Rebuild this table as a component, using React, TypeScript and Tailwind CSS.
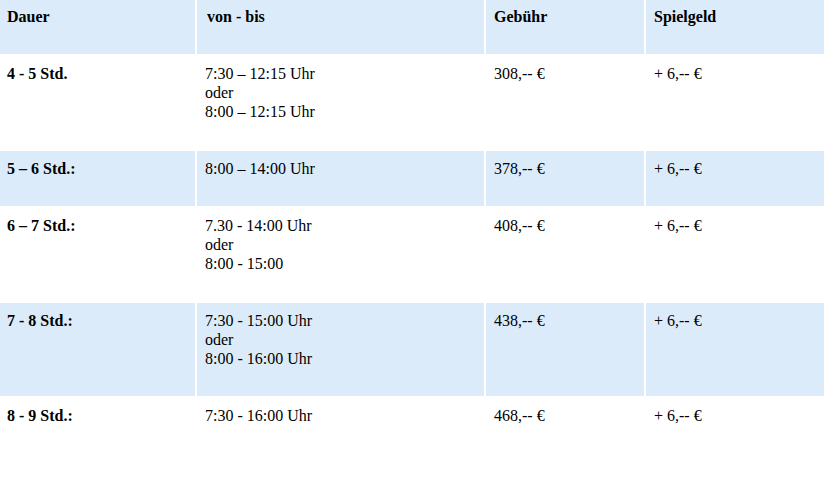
import React from "react";

type Row = {
  dauer: string;
  zeit: string[];
  gebuehr: string;
  spielgeld: string;
  height: string;
  pad: string;
  blue: boolean;
};

const rows: Row[] = [
  { dauer: "4 - 5 Std.", zeit: ["7:30 – 12:15 Uhr", "oder", "8:00 – 12:15 Uhr"], gebuehr: "308,-- €", spielgeld: "+ 6,-- €", height: "h-[97px]", pad: "pt-[10px]", blue: false },
  { dauer: "5 – 6 Std.:", zeit: ["8:00 – 14:00 Uhr"], gebuehr: "378,-- €", spielgeld: "+ 6,-- €", height: "h-[55px]", pad: "pt-[8px]", blue: true },
  { dauer: "6 – 7 Std.:", zeit: ["7.30 - 14:00 Uhr", "oder", "8:00 - 15:00"], gebuehr: "408,-- €", spielgeld: "+ 6,-- €", height: "h-[97px]", pad: "pt-[10px]", blue: false },
  { dauer: "7 - 8 Std.:", zeit: ["7:30 - 15:00 Uhr", "oder", "8:00 - 16:00 Uhr"], gebuehr: "438,-- €", spielgeld: "+ 6,-- €", height: "h-[93px]", pad: "pt-[8px]", blue: true },
  { dauer: "8 - 9 Std.:", zeit: ["7:30 - 16:00 Uhr"], gebuehr: "468,-- €", spielgeld: "+ 6,-- €", height: "h-[104px]", pad: "pt-[10px]", blue: false },
];

const App = () => {
  return (
    <div className="w-[824px] h-[500px] bg-white text-black font-['Liberation_Serif',serif] overflow-hidden">
      {/* Kopfzeile */}
      <div className="grid grid-cols-[195px_287px_158px_178px] gap-x-[2px] h-[54px] text-base font-bold leading-[19px]">
        <div className="bg-[#dbebfa] pl-[7px] pt-[7px]">Dauer</div>
        <div className="bg-[#dbebfa] pl-[10px] pt-[7px]">von - bis</div>
        <div className="bg-[#dbebfa] pl-2 pt-[7px]">Gebühr</div>
        <div className="bg-[#dbebfa] pl-2 pt-[7px]">Spielgeld</div>
      </div>

      {rows.map((row, i) => (
        <div
          key={i}
          className={`grid grid-cols-[195px_287px_158px_178px] gap-x-[2px] text-base leading-[19px] ${row.height}`}
        >
          <div className={`pl-[7px] ${row.pad} font-bold ${row.blue ? "bg-[#dbebfa]" : ""}`}>{row.dauer}</div>
          <div className={`pl-2 ${row.pad} ${row.blue ? "bg-[#dbebfa]" : ""}`}>
            {row.zeit.map((z, j) => (
              <div key={j}>{z}</div>
            ))}
          </div>
          <div className={`pl-2 ${row.pad} ${row.blue ? "bg-[#dbebfa]" : ""}`}>{row.gebuehr}</div>
          <div className={`pl-2 ${row.pad} ${row.blue ? "bg-[#dbebfa]" : ""}`}>{row.spielgeld}</div>
        </div>
      ))}
    </div>
  );
};

export default App;
